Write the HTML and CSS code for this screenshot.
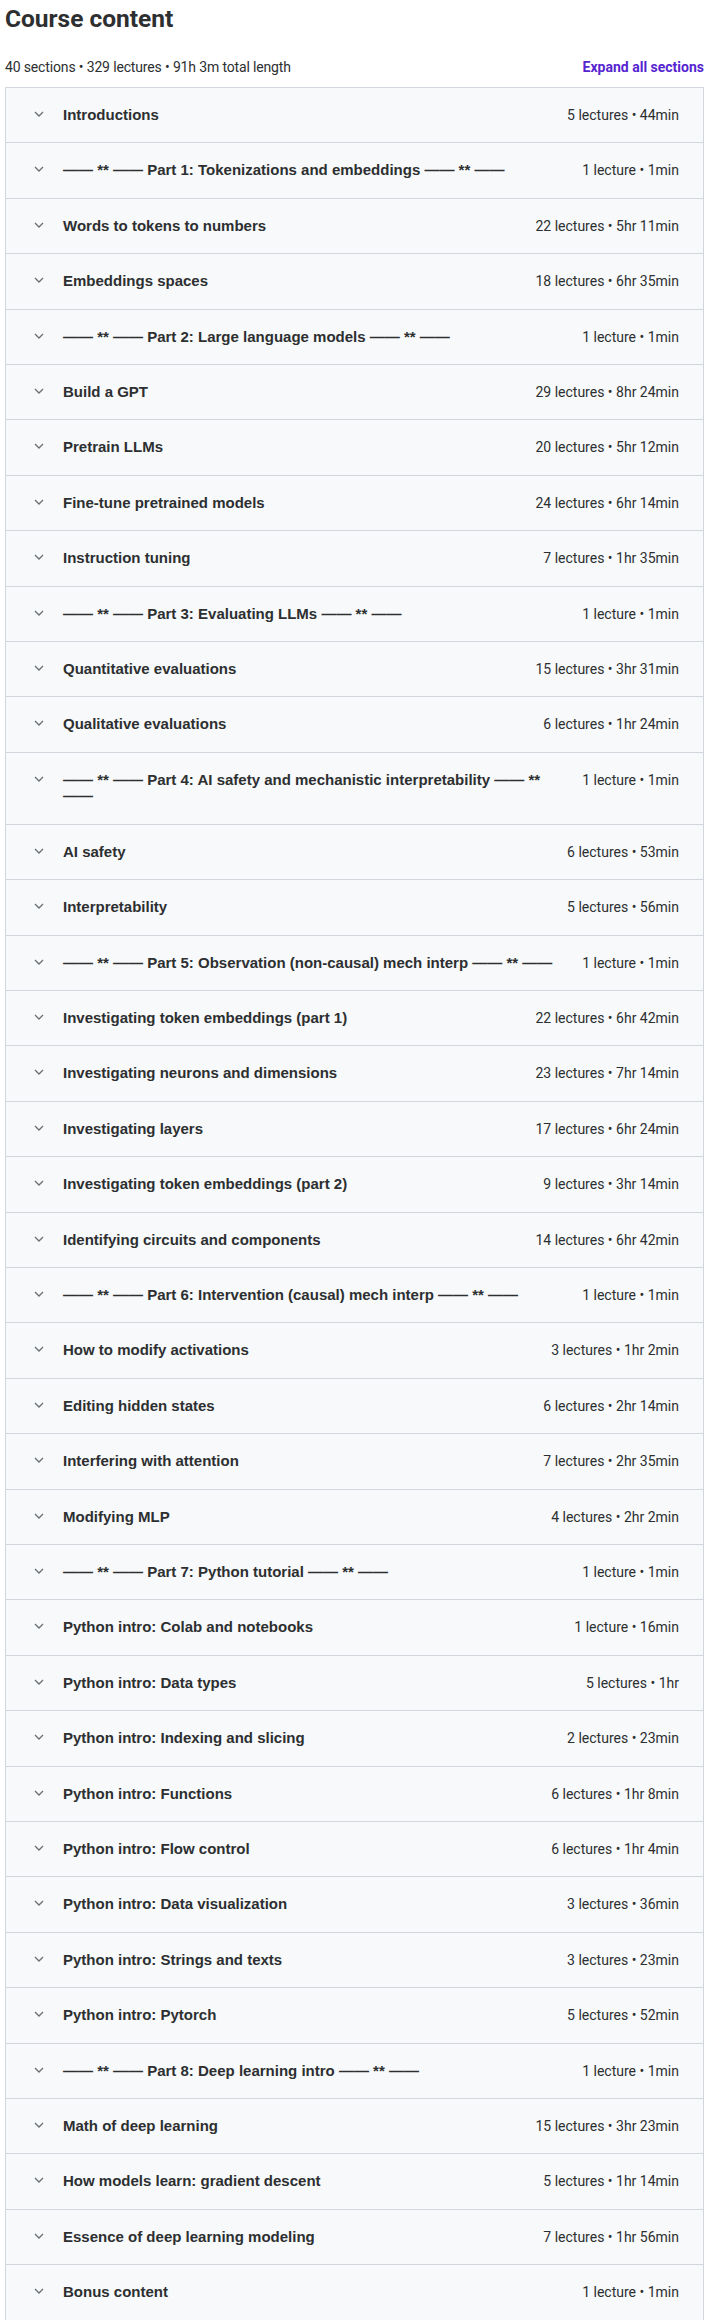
FILE: index.html
```html
<html>
    <head>
        <title>Course content</title>
        <meta charset="UTF-8"><meta name="viewport"
            content="width=device-width, initial-scale=1.0">

        <link rel="stylesheet" href="styles.css">
</head><body>
        <h2 class="content-title">Course content</h2>
        <div class="content-summary">
            <span>40 sections • 329 lectures • 91h 3m total length</span>
            <button class="expand-all">Expand all sections</button>
        </div>
        <div class="section-list" id="section-list"></div>

        <script>
const sections = [
    ['Introductions', '5 lectures • 44min'],
    ['—— ** —— Part 1: Tokenizations and embeddings —— ** ——', '1 lecture • 1min'],
    ['Words to tokens to numbers', '22 lectures • 5hr 11min'],
    ['Embeddings spaces', '18 lectures • 6hr 35min'],
    ['—— ** —— Part 2: Large language models —— ** ——', '1 lecture • 1min'],
    ['Build a GPT', '29 lectures • 8hr 24min'],
    ['Pretrain LLMs', '20 lectures • 5hr 12min'],
    ['Fine-tune pretrained models', '24 lectures • 6hr 14min'],
    ['Instruction tuning', '7 lectures • 1hr 35min'],
    ['—— ** —— Part 3: Evaluating LLMs —— ** ——', '1 lecture • 1min'],
    ['Quantitative evaluations', '15 lectures • 3hr 31min'],
    ['Qualitative evaluations', '6 lectures • 1hr 24min'],
    ['—— ** —— Part 4: AI safety and mechanistic interpretability —— ** ——', '1 lecture • 1min'],
    ['AI safety', '6 lectures • 53min'],
    ['Interpretability', '5 lectures • 56min'],
    ['—— ** —— Part 5: Observation (non-causal) mech interp —— ** ——', '1 lecture • 1min'],
    ['Investigating token embeddings (part 1)', '22 lectures • 6hr 42min'],
    ['Investigating neurons and dimensions', '23 lectures • 7hr 14min'],
    ['Investigating layers', '17 lectures • 6hr 24min'],
    ['Investigating token embeddings (part 2)', '9 lectures • 3hr 14min'],
    ['Identifying circuits and components', '14 lectures • 6hr 42min'],
    ['—— ** —— Part 6: Intervention (causal) mech interp —— ** ——', '1 lecture • 1min'],
    ['How to modify activations', '3 lectures • 1hr 2min'],
    ['Editing hidden states', '6 lectures • 2hr 14min'],
    ['Interfering with attention', '7 lectures • 2hr 35min'],
    ['Modifying MLP', '4 lectures • 2hr 2min'],
    ['—— ** —— Part 7: Python tutorial —— ** ——', '1 lecture • 1min'],
    ['Python intro: Colab and notebooks', '1 lecture • 16min'],
    ['Python intro: Data types', '5 lectures • 1hr'],
    ['Python intro: Indexing and slicing', '2 lectures • 23min'],
    ['Python intro: Functions', '6 lectures • 1hr 8min'],
    ['Python intro: Flow control', '6 lectures • 1hr 4min'],
    ['Python intro: Data visualization', '3 lectures • 36min'],
    ['Python intro: Strings and texts', '3 lectures • 23min'],
    ['Python intro: Pytorch', '5 lectures • 52min'],
    ['—— ** —— Part 8: Deep learning intro —— ** ——', '1 lecture • 1min'],
    ['Math of deep learning', '15 lectures • 3hr 23min'],
    ['How models learn: gradient descent', '5 lectures • 1hr 14min'],
    ['Essence of deep learning modeling', '7 lectures • 1hr 56min'],
    ['Bonus content', '1 lecture • 1min']
];

const list = document.getElementById('section-list');

sections.forEach(([title, meta]) => {
    const row = document.createElement('div');
    row.className = 'section-row';
    row.innerHTML = `
        <svg class="chevron" width="10" height="6" viewBox="0 0 10 6">
            <path d="M1 1 L5 5 L9 1" fill="none" stroke="#6a6f73" stroke-width="1.3"/>
        </svg>
        <span class="section-title">${title}</span>
        <span class="section-meta">${meta}</span>
    `;
    list.appendChild(row);
});
</script>
    </body></html>
```

FILE: styles.css
```css
body {
    font-family: Roboto, 'Liberation Sans', sans-serif;
    margin: 0;
    padding: 0 1px 0 5px;
    color: #2d2f31;
    background-color: #fff;
}
.content-title {
    font-size: 24.5px;
    font-weight: 700;
    line-height: 30px;
    margin: 0;
    padding-top: 4px;
}
.content-summary {
    display: flex;
    justify-content: space-between;
    align-items: baseline;
    font-size: 14px;
    line-height: 20px;
    margin: 23px 0 10px 0;
}
.content-summary span {
    letter-spacing: -0.15px;
}
.expand-all {
    font-family: inherit;
    font-size: 14px;
    font-weight: 700;
    color: #5624d0;
    background: none;
    border: none;
    padding: 0;
    cursor: pointer;
}
.section-list {
    border: 1px solid #d1d7dc;
    background-color: #f7f9fa;
}
.section-row {
    display: flex;
    align-items: flex-start;
    padding: 19px 24px 19px 28px;
    line-height: 16.4px;
}
.section-row + .section-row {
    border-top: 1px solid #d1d7dc;
}
.chevron {
    flex: none;
    margin: 4px 19px 0 0;
}
.section-title {
    flex: 1;
    font-family: 'Liberation Sans', Arial, sans-serif;
    font-size: 15px;
    font-weight: 700;
}
.section-meta {
    flex: none;
    margin-left: 16px;
    font-size: 14px;
}
```
